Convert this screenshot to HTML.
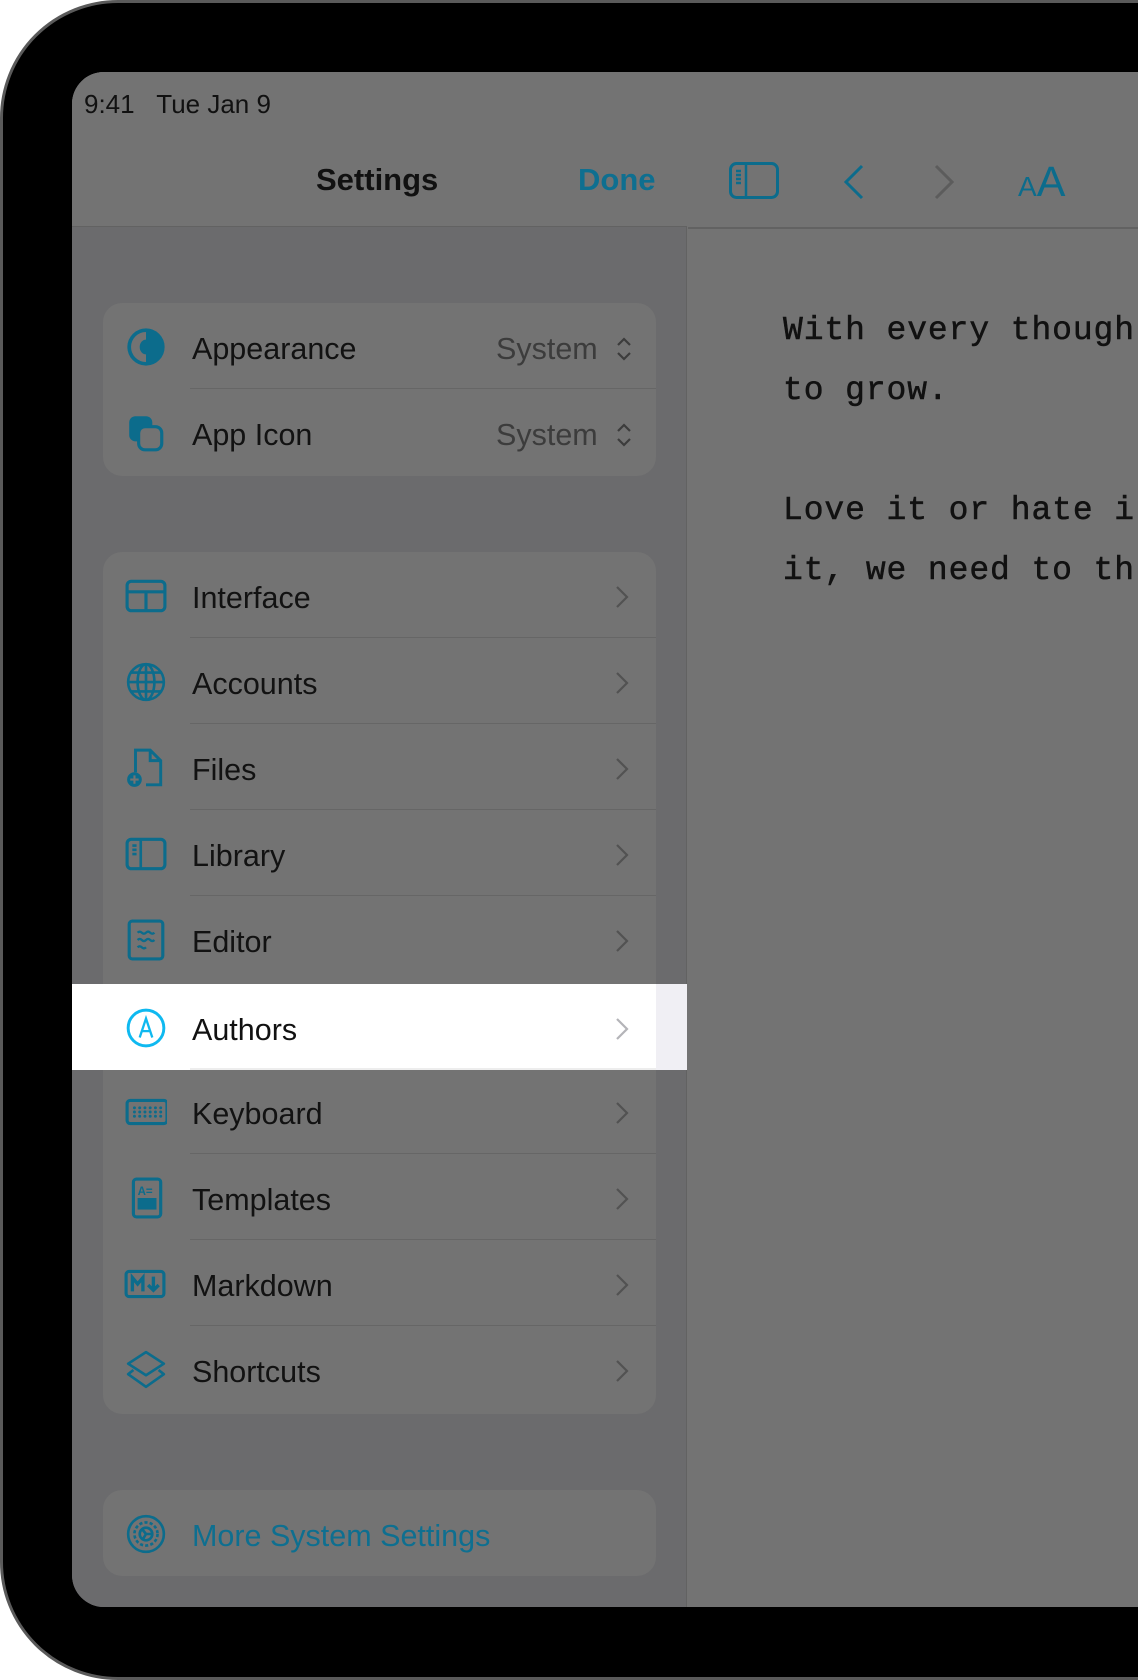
<!DOCTYPE html>
<html><head><meta charset="utf-8"><style>
*{margin:0;padding:0;box-sizing:border-box}
body{width:1138px;height:1680px;background:#fff;position:relative;overflow:hidden;font-family:"Liberation Sans",sans-serif}
.dev{position:absolute;left:0;top:0;width:1400px;height:1680px;background:#000;border:3px solid #5a5a5a;border-radius:118px}
.scr{position:absolute;left:72px;top:72px;width:1200px;height:1535px;background:#737373;border-radius:32px;overflow:hidden}
.side{position:absolute;left:0;top:0;width:615px;height:1535px;background:#6b6b6d;border-right:1px solid #626262}
.nav{position:absolute;left:0;top:0;width:615px;height:155px;background:#737373;border-bottom:1.5px solid #626262}
.abs{position:absolute}
.grp{position:absolute;left:31px;width:553px;background:#737373;border-radius:19px;overflow:hidden}
.row{position:absolute;left:0;width:553px;height:86px}
.row .t{position:absolute;left:89px;top:3px;line-height:86px;font-size:30.5px;color:#121212}
.row .sep{position:absolute;left:87px;right:0;bottom:0;height:1px;background:#666}
.row .ch{position:absolute;left:512px;top:33px}
.row .ic{position:absolute;left:22px;top:23px;width:42px;height:42px}
.val{position:absolute;left:393px;top:3px;line-height:86px;font-size:30.5px;color:#3c3c3c}
.mono{position:absolute;font-family:"Liberation Mono",monospace;font-size:33px;letter-spacing:0.9px;color:#111;white-space:pre;-webkit-text-stroke:0.5px #111}
</style></head><body>
<div class="dev"></div>
<div class="scr">
 <div class="side">
  <div class="nav">
   <div class="abs" style="left:12px;top:17px;font-size:26px;color:#111">9:41&nbsp;&nbsp;&nbsp;Tue Jan 9</div>
   <div class="abs" style="left:244px;top:90px;font-size:31px;font-weight:bold;color:#111">Settings</div>
   <div class="abs" style="left:506px;top:90px;font-size:31px;font-weight:bold;color:#0e6f90">Done</div>
  </div>
  <div class="grp" style="top:231px;height:173px">
   <div class="row" style="top:0">
    <svg class="ic" viewBox="0 0 40 40"><circle cx="20" cy="20" r="16" fill="none" stroke="#0c6c8c" stroke-width="3.5"/><path d="M20 4a16 16 0 0 1 0 32z" fill="#0c6c8c"/><path d="M20 13a6 7 0 0 0 0 14z" fill="#0c6c8c"/></svg>
    <div class="t">Appearance</div><div class="val">System</div>
    <svg class="abs" style="left:512px;top:32px" width="18" height="28" viewBox="0 0 18 28"><path d="M3 10l6-6 6 6M3 18l6 6 6-6" fill="none" stroke="#3c3c3c" stroke-width="2.2"/></svg>
    <div class="sep"></div>
   </div>
   <div class="row" style="top:86px">
    <svg class="ic" viewBox="0 0 40 40"><rect x="4" y="4" width="22" height="24" rx="6" fill="#0c6c8c"/><rect x="13" y="14" width="22" height="22" rx="6" fill="#737373" stroke="#0c6c8c" stroke-width="3"/></svg>
    <div class="t">App Icon</div><div class="val">System</div>
    <svg class="abs" style="left:512px;top:32px" width="18" height="28" viewBox="0 0 18 28"><path d="M3 10l6-6 6 6M3 18l6 6 6-6" fill="none" stroke="#3c3c3c" stroke-width="2.2"/></svg>
   </div>
  </div>
  <div class="grp" style="top:480px;height:862px">
   <div class="row" style="top:0"><svg class="ic" viewBox="0 0 40 40"><rect x="2" y="6" width="36" height="28" rx="4" fill="none" stroke="#0c6c8c" stroke-width="3"/><path d="M2 16h36M20 16v18" stroke="#0c6c8c" stroke-width="3"/></svg><div class="t">Interface</div><svg class="ch" width="14" height="24" viewBox="0 0 14 24"><path d="M2 2l10 10-10 10" fill="none" stroke="#525252" stroke-width="2.2"/></svg><div class="sep"></div></div>
   <div class="row" style="top:86px"><svg class="ic" viewBox="0 0 40 40"><g fill="none" stroke="#0c6c8c" stroke-width="2.5"><circle cx="20" cy="20" r="17"/><ellipse cx="20" cy="20" rx="8" ry="17"/><path d="M20 3v34M3 20h34M6 11h28M6 29h28"/></g></svg><div class="t">Accounts</div><svg class="ch" width="14" height="24" viewBox="0 0 14 24"><path d="M2 2l10 10-10 10" fill="none" stroke="#525252" stroke-width="2.2"/></svg><div class="sep"></div></div>
   <div class="row" style="top:172px"><svg class="ic" viewBox="0 0 40 40"><path d="M10 24V3h14l10 10v23H20M24 3v10h10" fill="none" stroke="#0c6c8c" stroke-width="2.8"/><circle cx="9" cy="31" r="7" fill="#0c6c8c"/><path d="M9 27v8M5 31h8" stroke="#737373" stroke-width="2"/></svg><div class="t">Files</div><svg class="ch" width="14" height="24" viewBox="0 0 14 24"><path d="M2 2l10 10-10 10" fill="none" stroke="#525252" stroke-width="2.2"/></svg><div class="sep"></div></div>
   <div class="row" style="top:258px"><svg class="ic" viewBox="0 0 40 40"><rect x="2" y="6" width="36" height="28" rx="4" fill="none" stroke="#0c6c8c" stroke-width="3"/><path d="M15 6v28M7 12h4M7 16h4M7 20h4" stroke="#0c6c8c" stroke-width="2.5"/></svg><div class="t">Library</div><svg class="ch" width="14" height="24" viewBox="0 0 14 24"><path d="M2 2l10 10-10 10" fill="none" stroke="#525252" stroke-width="2.2"/></svg><div class="sep"></div></div>
   <div class="row" style="top:344px"><svg class="ic" viewBox="0 0 40 40"><rect x="4" y="2" width="32" height="36" rx="3" fill="none" stroke="#0c6c8c" stroke-width="3"/><path d="M12 13q2-2 4 0t4 0 4 0 4 0M12 20q2-2 4 0t4 0 4 0 4 0M12 27q2-2 4 0t4 0" fill="none" stroke="#0c6c8c" stroke-width="2.2"/></svg><div class="t">Editor</div><svg class="ch" width="14" height="24" viewBox="0 0 14 24"><path d="M2 2l10 10-10 10" fill="none" stroke="#525252" stroke-width="2.2"/></svg></div>
   <div class="row" style="top:516px"><svg class="ic" viewBox="0 0 40 40"><rect x="2" y="9" width="38" height="22" rx="3" fill="none" stroke="#0c6c8c" stroke-width="3"/><g fill="#0c6c8c"><circle cx="9" cy="16" r="1.4"/><circle cx="14" cy="16" r="1.4"/><circle cx="19" cy="16" r="1.4"/><circle cx="24" cy="16" r="1.4"/><circle cx="29" cy="16" r="1.4"/><circle cx="34" cy="16" r="1.4"/><circle cx="9" cy="20" r="1.4"/><circle cx="14" cy="20" r="1.4"/><circle cx="19" cy="20" r="1.4"/><circle cx="24" cy="20" r="1.4"/><circle cx="29" cy="20" r="1.4"/><circle cx="34" cy="20" r="1.4"/><circle cx="9" cy="24" r="1.4"/><circle cx="14" cy="24" r="1.4"/><circle cx="19" cy="24" r="1.4"/><circle cx="24" cy="24" r="1.4"/><circle cx="29" cy="24" r="1.4"/><circle cx="34" cy="24" r="1.4"/></g></svg><div class="t">Keyboard</div><svg class="ch" width="14" height="24" viewBox="0 0 14 24"><path d="M2 2l10 10-10 10" fill="none" stroke="#525252" stroke-width="2.2"/></svg><div class="sep"></div></div>
   <div class="row" style="top:602px"><svg class="ic" viewBox="0 0 40 40"><rect x="8" y="2" width="26" height="36" rx="3" fill="none" stroke="#0c6c8c" stroke-width="3"/><text x="12" y="17" font-size="11" font-family="Liberation Sans" fill="#0c6c8c" font-weight="bold">A=</text><rect x="12" y="20" width="18" height="11" fill="#0c6c8c"/></svg><div class="t">Templates</div><svg class="ch" width="14" height="24" viewBox="0 0 14 24"><path d="M2 2l10 10-10 10" fill="none" stroke="#525252" stroke-width="2.2"/></svg><div class="sep"></div></div>
   <div class="row" style="top:688px"><svg class="ic" viewBox="0 0 40 40" style="left:19px;width:46px"><rect x="2" y="8" width="36" height="24" rx="3" fill="none" stroke="#0c6c8c" stroke-width="3"/><path d="M8 27V14l5 6 5-6v13" fill="none" stroke="#0c6c8c" stroke-width="3.2"/><path d="M28 13v13M23 21l5 5 5-5" fill="none" stroke="#0c6c8c" stroke-width="3.2"/></svg><div class="t">Markdown</div><svg class="ch" width="14" height="24" viewBox="0 0 14 24"><path d="M2 2l10 10-10 10" fill="none" stroke="#525252" stroke-width="2.2"/></svg><div class="sep"></div></div>
   <div class="row" style="top:774px"><svg class="ic" viewBox="0 0 40 40"><path d="M20 3L37 14 20 25 3 14z M8 20L3 24 20 36 37 24 32 20" fill="none" stroke="#0c6c8c" stroke-width="2.5" stroke-linejoin="round"/></svg><div class="t">Shortcuts</div><svg class="ch" width="14" height="24" viewBox="0 0 14 24"><path d="M2 2l10 10-10 10" fill="none" stroke="#525252" stroke-width="2.2"/></svg></div>
  </div>
  <div class="abs" style="left:0;top:912px;width:615px;height:86px;background:#f0eff4">
   <div class="abs" style="left:0;top:0;width:584px;height:86px;background:#fff"></div>
   <svg class="abs" style="left:53px;top:23px" width="42" height="42" viewBox="0 0 40 40"><circle cx="20" cy="20" r="17" fill="none" stroke="#0fb9f0" stroke-width="2.8"/><path d="M14 29l6-18 6 18M16 23h8" fill="none" stroke="#0fb9f0" stroke-width="2.2"/></svg>
   <div class="abs" style="left:120px;top:3px;line-height:86px;font-size:30.5px;color:#111">Authors</div>
   <svg class="abs" style="left:543px;top:33px" width="14" height="24" viewBox="0 0 14 24"><path d="M2 2l10 10-10 10" fill="none" stroke="#b4b4b8" stroke-width="2.2"/></svg>
   <div class="abs" style="left:118px;top:84px;width:466px;height:2px;background:#ededed"></div>
  </div>
  <div class="grp" style="top:1418px;height:86px">
   <div class="row" style="top:0"><svg class="ic" viewBox="0 0 40 40"><g fill="none" stroke="#0c6c8c" stroke-width="2.5"><circle cx="20" cy="20" r="17"/><circle cx="20" cy="20" r="11" stroke-dasharray="3 2"/><circle cx="20" cy="20" r="6"/><path d="M20 20l-4 -5M20 20l6 0M20 20l-3 5"/></g></svg><div class="t" style="color:#0e6f90">More System Settings</div></div>
  </div>
 </div>
 <div class="abs" style="left:616px;top:155px;width:600px;height:1.5px;background:#626262"></div>
 <svg class="abs" style="left:657px;top:90px" width="50" height="37" viewBox="0 0 50 37"><rect x="1.5" y="1.5" width="47" height="34" rx="6" fill="none" stroke="#0c6c8c" stroke-width="3"/><path d="M17 1.5v34M7 9h5M7 13h5M7 17h5M7 21h5" stroke="#0c6c8c" stroke-width="2.5"/></svg>
 <svg class="abs" style="left:770px;top:92px" width="24" height="36" viewBox="0 0 24 36"><path d="M20 2L4 18l16 16" fill="none" stroke="#0c6c8c" stroke-width="3"/></svg>
 <svg class="abs" style="left:860px;top:92px" width="24" height="36" viewBox="0 0 24 36"><path d="M4 2l16 16L4 34" fill="none" stroke="#5c5c5c" stroke-width="3"/></svg>
 <div class="abs" style="left:946px;top:86px;color:#0c6c8c;white-space:nowrap"><span style="font-size:28px">A</span><span style="font-size:43px">A</span></div>
 <div class="mono" style="left:711px;top:240px">With every though</div>
 <div class="mono" style="left:711px;top:300px">to grow.</div>
 <div class="mono" style="left:711px;top:420px">Love it or hate i</div>
 <div class="mono" style="left:711px;top:480px">it, we need to th</div>
</div>
</body></html>
